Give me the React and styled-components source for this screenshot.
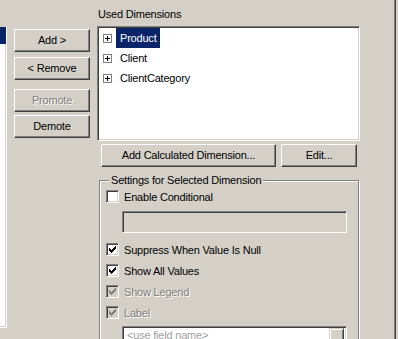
import React from "react";
import styled, { createGlobalStyle } from "styled-components";

const GlobalStyle = createGlobalStyle`
  html, body {
    margin: 0;
    padding: 0;
    background: #d4d0c8;
  }
  body {
    font-family: "Liberation Sans", Arial, sans-serif;
    font-size: 11px;
    letter-spacing: -0.2px;
    color: #000;
  }
`;

const Page = styled.div`
  display: flex;
  align-items: flex-start;
  width: 398px;
  height: 339px;
  overflow: hidden;
`;

// the dimension list on the left, clipped by the window edge
const SideList = styled.div`
  margin-top: 27px;
  width: 6px;
  height: 300px;
  background: #fff;
  border-right: 1px solid #fff;
  border-bottom: 1px solid #fff;
  box-shadow: inset -1px -1px 0 #d4d0c8;
  flex-shrink: 0;
`;

const SideSelection = styled.div`
  height: 17px;
  background: #0a246a;
`;

const ButtonColumn = styled.div`
  display: flex;
  flex-direction: column;
  margin: 29px 0 0 7px;
  width: 76px;
  flex-shrink: 0;
`;

const Button = styled.button`
  box-sizing: border-box;
  width: ${(p) => p.$w || 76}px;
  height: 23px;
  margin: 0;
  margin-top: ${(p) => p.$mt || 0}px;
  padding: 0;
  background: #d4d0c8;
  border: 1px solid;
  border-color: #fff #404040 #404040 #fff;
  box-shadow: inset -1px -1px 0 #808080, inset 1px 1px 0 #d4d0c8;
  font: inherit;
  letter-spacing: inherit;
  color: ${(p) => (p.disabled ? "#808080" : "#000")};
  text-shadow: ${(p) => (p.disabled ? "1px 1px 0 #fff" : "none")};
  line-height: 13px;
`;

const Panel = styled.div`
  margin-left: 7px;
  width: 263px;
  flex-shrink: 0;
`;

const Caption = styled.div`
  margin: 8px 0 0 1px;
  line-height: 13px;
`;

const sunken = `
  box-sizing: border-box;
  border: 1px solid;
  border-color: #808080 #fff #fff #808080;
  box-shadow: inset 1px 1px 0 #404040, inset -1px -1px 0 #d4d0c8;
`;

const ListBox = styled.div`
  ${sunken}
  margin-top: 5px;
  height: 115px;
  background: #fff;
  padding: 1px 0 0 5px;
`;

const TreeRow = styled.div`
  display: flex;
  align-items: center;
  height: 20px;
`;

const ExpandBox = styled.svg`
  width: 9px;
  height: 9px;
  margin-right: 4px;
  flex-shrink: 0;
`;

const TreeLabel = styled.span`
  line-height: 20px;
  padding: 0 3px 0 4px;
  background: ${(p) => (p.$selected ? "#0a246a" : "transparent")};
  color: ${(p) => (p.$selected ? "#fff" : "#000")};
`;

const ActionRow = styled.div`
  display: flex;
  gap: 5px;
  margin: 3px 0 0 4px;
`;

const Group = styled.fieldset`
  box-sizing: border-box;
  margin: 7px 0 0 2px;
  width: 260px;
  min-width: 0;
  height: 200px;
  padding: 0 0 0 6px;
  border: 1px solid #808080;
  box-shadow: inset 1px 1px 0 #fff, 1px 1px 0 #fff;
`;

const Legend = styled.legend`
  margin-left: 3px;
  padding: 0 2px 0 2px;
  line-height: 13px;
  background: #d4d0c8;
`;

const CheckRow = styled.div`
  display: flex;
  align-items: center;
  gap: 5px;
  height: 21px;
  margin-top: ${(p) => p.$mt || 0}px;
  color: ${(p) => (p.$disabled ? "#808080" : "#000")};
  text-shadow: ${(p) => (p.$disabled ? "1px 1px 0 #fff" : "none")};
`;

const CheckBox = styled.span`
  ${sunken}
  display: flex;
  align-items: center;
  justify-content: center;
  width: 13px;
  height: 13px;
  flex-shrink: 0;
  background: ${(p) => (p.$disabled ? "#d4d0c8" : "#fff")};
`;

const Field = styled.div`
  ${sunken}
  display: flex;
  align-items: flex-start;
  margin: ${(p) => p.$mt || 0}px 0 0 16px;
  width: 225px;
  height: ${(p) => p.$h || 22}px;
  background: ${(p) => (p.$gray ? "#d4d0c8" : "#fff")};
  padding: 2px 2px 2px 4px;
`;

const Placeholder = styled.span`
  flex: 1;
  line-height: 13px;
  margin-top: 0;
  color: #a0a0a0;
`;

const DropButton = styled.div`
  box-sizing: border-box;
  width: 15px;
  height: 17px;
  margin-top: -1px;
  background: #d4d0c8;
  border: 1px solid;
  border-color: #d4d0c8 #404040 #404040 #d4d0c8;
  box-shadow: inset 1px 1px 0 #fff, inset -1px -1px 0 #808080;
`;

const Edge = styled.div`
  margin-left: auto;
  width: 3px;
  height: 339px;
  border-left: 1px solid #808080;
  box-shadow: inset 1px 0 0 #404040;
  flex-shrink: 0;
`;

// classic 7x7 tick, drawn pixel by pixel
const tickTops = [2, 3, 4, 3, 2, 1, 0];

const Tick = ({ color }) => (
  <svg width="9" height="9" viewBox="0 0 9 9" shapeRendering="crispEdges">
    {tickTops.map((top, i) => (
      <rect key={i} x={i + 1} y={top + 1} width="1" height="3" fill={color} />
    ))}
  </svg>
);

const Plus = () => (
  <ExpandBox viewBox="0 0 9 9" shapeRendering="crispEdges">
    <rect x="0.5" y="0.5" width="8" height="8" fill="#fff" stroke="#808080" />
    <rect x="2" y="4" width="5" height="1" fill="#000" />
    <rect x="4" y="2" width="1" height="5" fill="#000" />
  </ExpandBox>
);

const Check = ({ label, checked, disabled, mt }) => (
  <CheckRow $disabled={disabled} $mt={mt}>
    <CheckBox $disabled={disabled}>
      {checked && <Tick color={disabled ? "#808080" : "#000"} />}
    </CheckBox>
    <span>{label}</span>
  </CheckRow>
);

const dimensions = [
  { name: "Product", selected: true },
  { name: "Client" },
  { name: "ClientCategory" },
];

export default function App() {
  return (
    <>
      <GlobalStyle />
      <Page>
        <SideList>
          <SideSelection />
        </SideList>

        <ButtonColumn>
          <Button>Add &gt;</Button>
          <Button $mt={5}>&lt; Remove</Button>
          <Button $mt={9} disabled>
            Promote
          </Button>
          <Button $mt={3}>Demote</Button>
        </ButtonColumn>

        <Panel>
          <Caption>Used Dimensions</Caption>
          <ListBox>
            {dimensions.map((d) => (
              <TreeRow key={d.name}>
                <Plus />
                <TreeLabel $selected={d.selected}>{d.name}</TreeLabel>
              </TreeRow>
            ))}
          </ListBox>
          <ActionRow>
            <Button $w={175}>Add Calculated Dimension...</Button>
            <Button>Edit...</Button>
          </ActionRow>

          <Group>
            <Legend>Settings for Selected Dimension</Legend>
            <Check label="Enable Conditional" mt={-1} />
            <Field $gray $mt={4} />
            <Check label="Suppress When Value Is Null" checked mt={6} />
            <Check label="Show All Values" checked />
            <Check label="Show Legend" checked disabled />
            <Check label="Label" checked disabled />
            <Field $mt={3} $h={21}>
              <Placeholder>&lt;use field name&gt;</Placeholder>
              <DropButton />
            </Field>
          </Group>
        </Panel>

        <Edge />
      </Page>
    </>
  );
}
